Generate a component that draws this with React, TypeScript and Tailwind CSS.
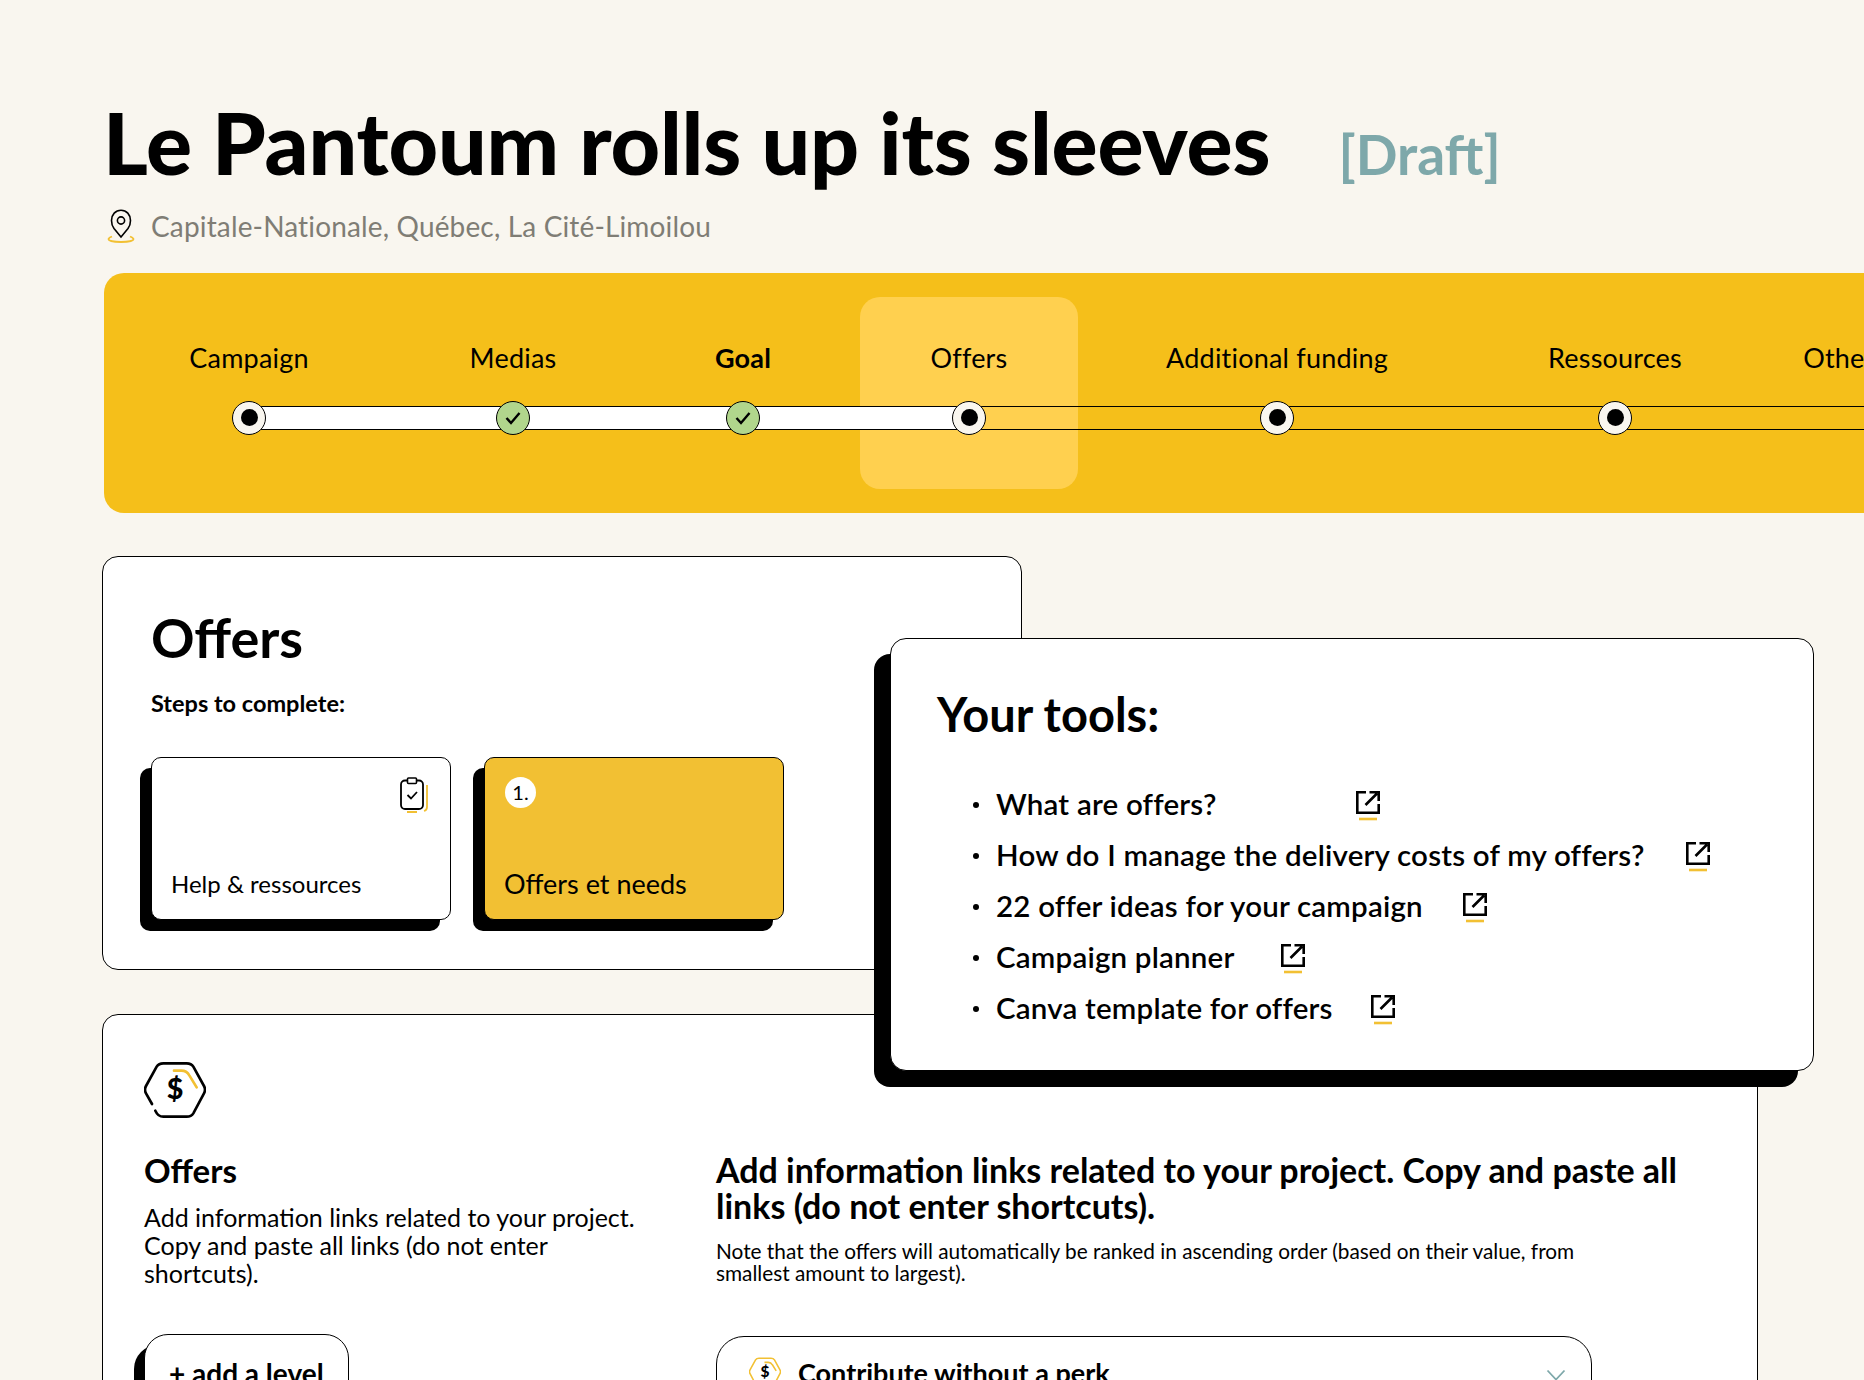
const font = "font-['Lato','Liberation_Sans',sans-serif]"

const steps = [
  { label: 'Campaign', state: 'todo', className: 'ml-[85px]' },
  { label: 'Medias', state: 'done', className: 'ml-[144px]' },
  { label: 'Goal', state: 'done', bold: true, className: 'ml-[110px]' },
  { label: 'Offers', state: 'todo', className: 'ml-[106px]' },
  { label: 'Additional funding', state: 'todo', className: 'ml-[188px]' },
  { label: 'Ressources', state: 'todo', className: 'ml-[218px]' },
  { label: 'Other information', state: 'todo', className: 'ml-[177px]' },
]

const tools = [
  { label: 'What are offers?', className: 'ml-[139px]' },
  { label: 'How do I manage the delivery costs of my offers?', className: 'ml-[41px]' },
  { label: '22 offer ideas for your campaign', className: 'ml-[40px]' },
  { label: 'Campaign planner', className: 'ml-[46px]' },
  { label: 'Canva template for offers', className: 'ml-[38px]' },
]

function PinIcon() {
  return (
    <svg width="28" height="34" viewBox="0 0 28 34" fill="none">
      <path d="M5 27.5c-2 .8-3.5 1.7-3.5 2.7 0 1.5 5.5 2.8 12.5 2.8s12.500-1.300 12.500-2.800c0-1-1.500-1.900-3.500-2.700" stroke="#f2c033" strokeWidth="1.800" />
      <path d="M14 28 7 19.500C5.500 17.500 4.500 15.500 4.500 11.500 4.500 5.500 8.500 1.200 14 1.200s9.500 4.300 9.500 10.300c0 4-1 6-2.500 8L14 28Z" stroke="#000" strokeWidth="1.600" />
      <circle cx="14" cy="11.500" r="3.600" stroke="#000" strokeWidth="1.600" />
    </svg>
  )
}

function ExternalIcon() {
  return (
    <svg width="24" height="30" viewBox="0 0 24 30" fill="none" className="shrink-0">
      <path d="M10 1.300H1.300v20.400h21.400V13" stroke="#000" strokeWidth="2.600" />
      <path d="M9.500 14 21 2.500M13.500 1.300h9.200V10" stroke="#000" strokeWidth="2.600" />
      <path d="M3 28h18" stroke="#f2c033" strokeWidth="2.600" />
    </svg>
  )
}

function ClipboardIcon() {
  return (
    <svg width="30" height="36" viewBox="0 0 30 36" fill="none">
      <rect x="1" y="3.500" width="22" height="28.500" rx="4" stroke="#000" strokeWidth="1.800" />
      <rect x="7.500" y="1" width="9" height="5.500" rx="1" fill="#fff" stroke="#000" strokeWidth="1.600" />
      <path d="m7.500 18 3.500 3.500 6-6.500" stroke="#000" strokeWidth="1.800" />
      <path d="M27 8v22c0 2-1 3.500-3 4M7 35h10" stroke="#f2c033" strokeWidth="1.800" />
    </svg>
  )
}

function HexIcon() {
  return (
    <svg width="62" height="58" viewBox="0 0 186 172" fill="none">
      <path d="M24 128 6 96Q0 85 6 74L38 16Q44 6 58 6H128Q142 6 148 16L180 74Q186 85 180 96L148 156Q142 166 128 166H58Q42 166 34 148" stroke="#000" strokeWidth="8" strokeLinecap="round" />
      <path d="M90 28H112Q128 28 136 42L158 78" stroke="#f2c033" strokeWidth="8" strokeLinecap="round" />
      <text x="93" y="112" textAnchor="middle" fontSize="86" fontWeight="900" fontFamily="Lato, sans-serif" fill="#000">$</text>
    </svg>
  )
}

function SmallHexIcon() {
  return (
    <svg width="32" height="30" viewBox="0 0 186 172" fill="none">
      <path d="M6 96Q0 85 6 74L38 16Q44 6 58 6H128Q142 6 148 16L180 74Q186 85 180 96L148 156Q142 166 128 166H58Q44 166 38 156Z" stroke="#f2c033" strokeWidth="9" />
      <path d="M90 30H112Q128 30 136 44L158 80" stroke="#f2c033" strokeWidth="9" />
      <text x="93" y="116" textAnchor="middle" fontSize="90" fontWeight="900" fontFamily="Lato, sans-serif" fill="#000">$</text>
    </svg>
  )
}

function StepDot({ state }: { state: string }) {
  if (state === 'done') {
    return (
      <span className="z-10 flex h-[34px] w-[34px] items-center justify-center rounded-full border border-black bg-[#b1d68c]">
        <svg width="18" height="16" viewBox="0 0 18 16" fill="none">
          <path d="m2.500 8 4.500 5 8.500-10" stroke="#000" strokeWidth="2.400" />
        </svg>
      </span>
    )
  }
  return (
    <span className="z-10 flex h-[34px] w-[34px] items-center justify-center rounded-full border border-black bg-[#f9f6ef]">
      <span className="h-[17px] w-[17px] rounded-full bg-black" />
    </span>
  )
}

export default function App() {
  return (
    <div className={`${font} relative h-[1380px] w-[1864px] overflow-hidden bg-[#f9f6ef] text-black`}>
      <div className="flex items-baseline pl-[103px] pt-[92px]">
        <h1 className="text-[86px] font-black leading-[100px] tracking-[-0.15px]">Le Pantoum rolls up its sleeves</h1>
        <span className="ml-[68px] text-[55px] font-bold text-[#7ea8aa]">[Draft]</span>
      </div>

      <div className="mt-[13px] flex h-[34px] items-center gap-[16px] pl-[107px] text-[28px] tracking-[0.15px] text-[#7f7d75]">
        <PinIcon />
        <span>Capitale-Nationale, Québec, La Cité-Limoilou</span>
      </div>

      <div className="relative ml-[104px] mt-[30px] h-[240px] w-[1900px] rounded-[20px] bg-[#f5bf1a]">
        <div className="absolute left-[756px] top-[24px] h-[192px] w-[218px] rounded-[20px] bg-[#ffd04f]" />
        <div className="absolute left-[145px] top-[133px] h-[24px] w-[720px] border-y border-black bg-white" />
        <div className="absolute left-[865px] top-[133px] h-[24px] w-[1100px] border-y border-black" />
        <div className="relative flex pt-[68px]">
          {steps.map((step) => (
            <div key={step.label} className={`flex w-[120px] shrink-0 flex-col items-center ${step.className}`}>
              <span className={`h-[34px] whitespace-nowrap text-[27px] leading-[34px] tracking-[0.2px] ${step.bold ? 'font-bold' : ''}`}>{step.label}</span>
              <div className="mt-[26px]">
                <StepDot state={step.state} />
              </div>
            </div>
          ))}
        </div>
      </div>

      <section className="ml-[102px] mt-[43px] h-[414px] w-[920px] rounded-[16px] border border-black bg-white pl-[48px] pt-[51px]">
        <h2 className="text-[54px] font-bold leading-[60px]">Offers</h2>
        <p className="mt-[20px] text-[23.500px] font-bold leading-[30px]">Steps to complete:</p>
        <div className="mt-[39px] flex gap-[33px]">
          <div className="relative h-[163px] w-[300px] rounded-[10px] border border-black bg-white shadow-[-11px_11px_0_0_#000]">
            <div className="absolute right-[20px] top-[19px]">
              <ClipboardIcon />
            </div>
            <span className="absolute bottom-[20px] left-[19px] text-[24px] leading-[30px]">Help &amp; ressources</span>
          </div>
          <div className="relative h-[163px] w-[300px] rounded-[10px] border border-black bg-[#f2c033] shadow-[-11px_11px_0_0_#000]">
            <span className="absolute left-[20px] top-[19px] flex h-[31px] w-[31px] items-center justify-center rounded-full bg-white text-[20px]">1.</span>
            <span className="absolute bottom-[20px] left-[19px] text-[27px] leading-[30px]">Offers et needs</span>
          </div>
        </div>
      </section>

      <section className="ml-[102px] mt-[44px] flex h-[500px] w-[1656px] rounded-[16px] border border-black bg-white">
        <div className="w-[613px] shrink-0 pl-[41px] pt-[46px]">
          <HexIcon />
          <h3 className="mt-[31px] text-[33px] font-bold leading-[40px]">Offers</h3>
          <p className="mt-[13px] w-[510px] text-[25px] leading-[28px]">
            Add information links related to your project. Copy and paste all links (do not enter shortcuts).
          </p>
          <button className="mt-[47px] h-[90px] w-[205px] rounded-[24px] border border-black bg-white pb-[12px] pl-[24px] text-left text-[28px] font-bold shadow-[-10px_11px_0_0_#000]">
            + add a level
          </button>
        </div>
        <div className="pt-[137px]">
          <h3 className="w-[985px] text-[34px] font-bold leading-[36px]">
            Add information links related to your project. Copy and paste all links (do not enter shortcuts).
          </h3>
          <p className="mt-[16px] w-[880px] text-[20.800px] leading-[22px]">
            Note that the offers will automatically be ranked in ascending order (based on their value, from smallest amount to largest).
          </p>
          <div className="mt-[52px] flex h-[90px] w-[876px] items-start rounded-[28px] border border-black px-[32px] pt-[20px]">
            <SmallHexIcon />
            <span className="ml-[17px] text-[27px] font-bold leading-[32px]">Contribute without a perk</span>
            <svg width="20" height="12" viewBox="0 0 20 12" fill="none" className="ml-auto mr-[-7px] mt-[12px]">
              <path d="m1.500 1.500 8.500 9 8.500-9" stroke="#7ea8aa" strokeWidth="1.800" />
            </svg>
          </div>
        </div>
      </section>

      <aside className="absolute left-[890px] top-[638px] h-[433px] w-[924px] rounded-[16px] border border-black bg-white pl-[46px] pt-[49px] shadow-[-16px_16px_0_0_#000]">
        <h2 className="text-[47px] font-bold leading-[52px]">Your tools:</h2>
        <ul className="mt-[39px] flex flex-col">
          {tools.map((tool) => (
            <li key={tool.label} className="flex h-[51px] items-center pl-[36px] text-[29.500px] font-semibold tracking-[0.2px]">
              <span className="mr-[17px] h-[6px] w-[6px] rounded-full bg-black" />
              <span>{tool.label}</span>
              <span className={`mt-[3px] ${tool.className}`}>
                <ExternalIcon />
              </span>
            </li>
          ))}
        </ul>
      </aside>
    </div>
  )
}
